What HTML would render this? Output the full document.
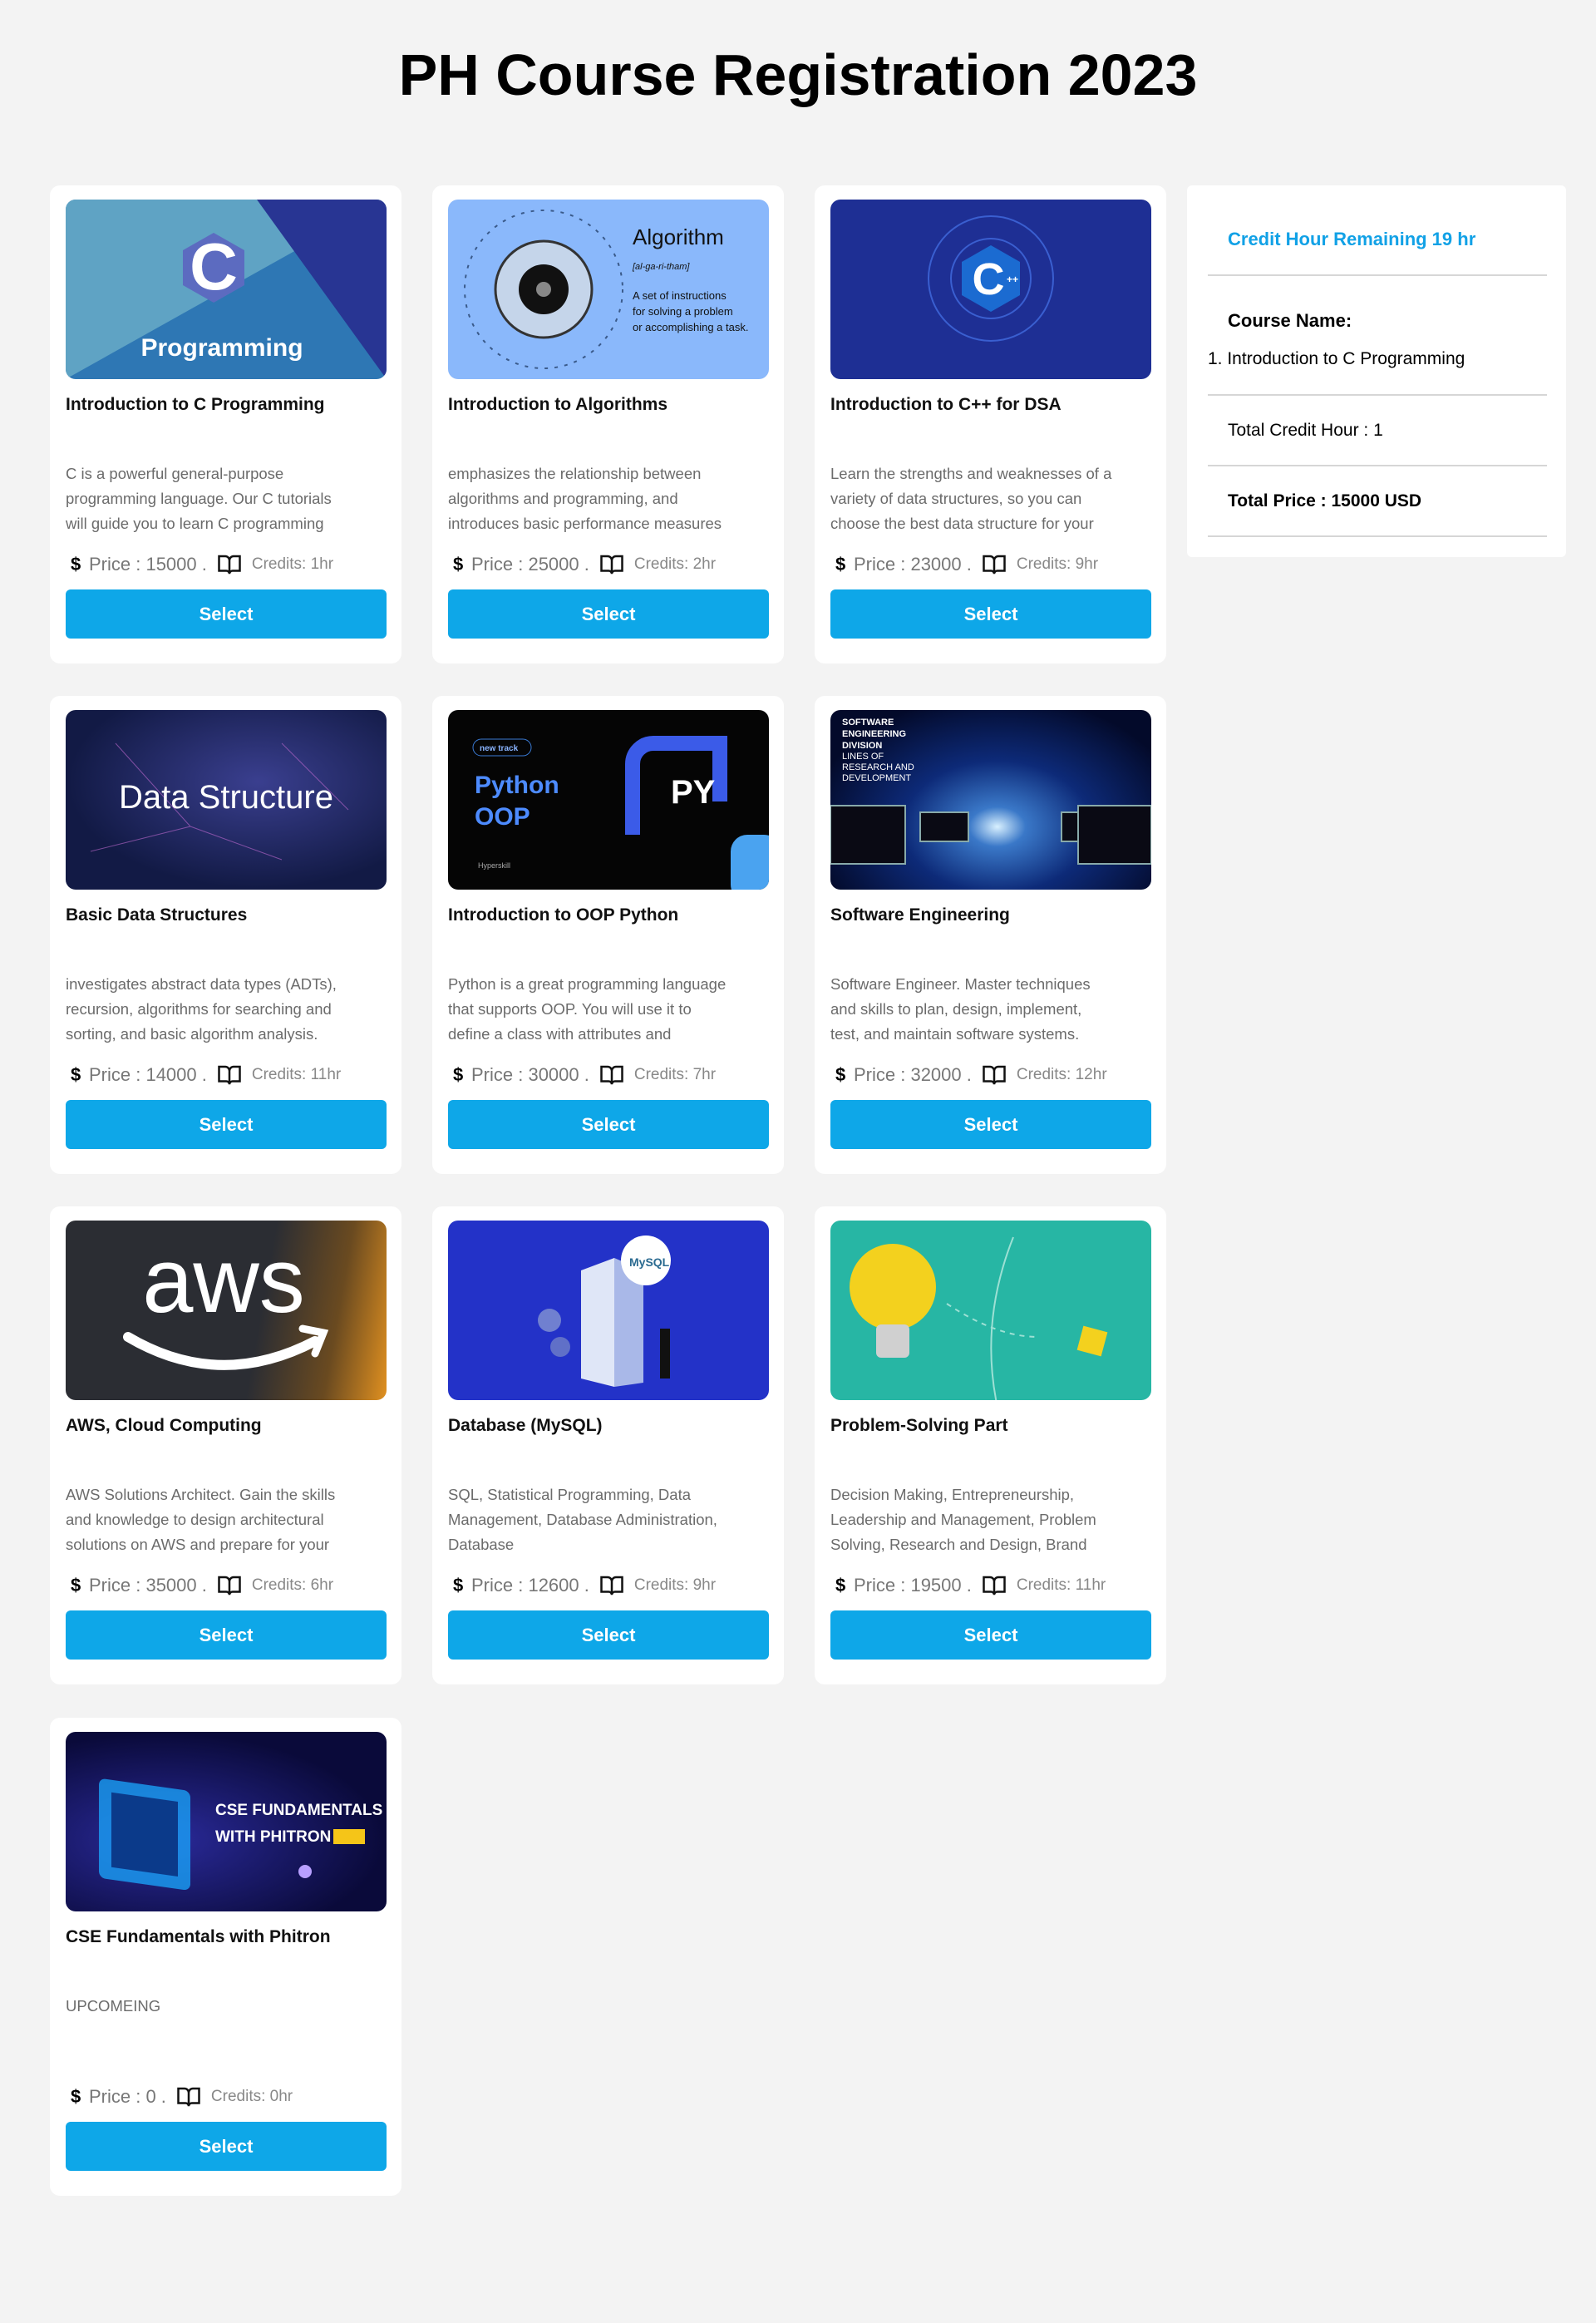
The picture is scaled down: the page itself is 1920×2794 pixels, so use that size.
<!DOCTYPE html>
<html><head><meta charset="utf-8">
<style>
*{box-sizing:border-box;margin:0;padding:0}
body{width:1920px;height:2794px;background:#f3f3f3;font-family:"Liberation Sans",sans-serif;position:relative;overflow:hidden}
h1{position:absolute;top:48px;left:0;width:1920px;text-align:center;font-size:70px;font-weight:900;color:#000;line-height:84px}
.card{position:absolute;width:423px;height:575px;background:#fff;border-radius:12px}
.img{position:absolute;left:19px;top:17px;width:386px;height:216px;border-radius:12px;overflow:hidden}
.t{position:absolute;left:19px;top:252px;font-size:21px;font-weight:bold;color:#111}
.d{position:absolute;left:19px;top:332px;width:390px;font-size:18.5px;line-height:30px;color:#6b6b6b;height:90px;overflow:hidden;white-space:nowrap}
.p{position:absolute;left:19px;top:440px;height:32px;display:flex;align-items:center;color:#777;font-size:22px;white-space:nowrap}
.p .dl{font-weight:900;color:#000;width:22px;margin-left:6px;font-size:22px}
.p .bk{margin:0 12px 0 12px}
.p .cr{font-size:19px;color:#888}
.b{position:absolute;left:19px;top:486px;width:386px;height:59px;background:#0ea7e8;border-radius:6px;color:#fff;font-weight:bold;font-size:22px;text-align:center;line-height:59px}
.side{position:absolute;left:1428px;top:223px;width:456px;height:447px;background:#fff;border-radius:6px}
.side .hr{position:absolute;left:25px;width:408px;height:2px;background:#d6d6d6}
.side div.tx{position:absolute;left:49px;font-size:21px;color:#000}
</style></head><body>
<h1>PH Course Registration 2023</h1>

<!-- Row 1 -->
<div class="card" style="left:60px;top:223px">
 <div class="img" style="background:#2e77b4">
  <svg width="386" height="216"><polygon points="0,0 386,0 0,216" fill="#5fa3c4"/><polygon points="230,0 386,0 386,216" fill="#283593"/>
  <polygon points="178,40 215,61 215,103 178,124 141,103 141,61" fill="#5c6bc0"/>
  <text x="178" y="108" text-anchor="middle" font-size="80" font-weight="bold" fill="#fff" font-family="Liberation Sans">C</text>
  <text x="188" y="188" text-anchor="middle" font-size="30" font-weight="bold" fill="#fff" font-family="Liberation Sans">Programming</text></svg>
 </div>
 <div class="t">Introduction to C Programming</div>
 <div class="d">C is a powerful general-purpose<br>programming language. Our C tutorials<br>will guide you to learn C programming</div>
 <div class="p"><span class="dl">$</span>Price : 15000 .<svg class="bk" width="30" height="28" viewBox="0 0 24 22"><path d="M2 3h6a4 4 0 0 1 4 4v13a3 3 0 0 0-3-3H2zM22 3h-6a4 4 0 0 0-4 4v13a3 3 0 0 1 3-3h7z" fill="none" stroke="#111" stroke-width="2"/></svg><span class="cr">Credits: 1hr</span></div>
 <div class="b">Select</div>
</div>

<div class="card" style="left:520px;top:223px">
 <div class="img" style="background:#8ab8fb">
  <svg width="386" height="216"><circle cx="115" cy="108" r="95" fill="none" stroke="#3a5a8a" stroke-width="2" stroke-dasharray="4 8"/><circle cx="115" cy="108" r="58" fill="#c5d5ea" stroke="#333" stroke-width="3"/><circle cx="115" cy="108" r="30" fill="#111"/><circle cx="115" cy="108" r="9" fill="#888"/>
  <text x="222" y="54" font-size="26" fill="#111" font-family="Liberation Sans">Algorithm</text>
  <text x="222" y="84" font-size="11" fill="#111" font-style="italic" font-family="Liberation Sans">[al-ga-ri-tham]</text>
  <text x="222" y="120" font-size="13" fill="#111" font-family="Liberation Sans">A set of instructions</text>
  <text x="222" y="139" font-size="13" fill="#111" font-family="Liberation Sans">for solving a problem</text>
  <text x="222" y="158" font-size="13" fill="#111" font-family="Liberation Sans">or accomplishing a task.</text></svg>
 </div>
 <div class="t">Introduction to Algorithms</div>
 <div class="d">emphasizes the relationship between<br>algorithms and programming, and<br>introduces basic performance measures</div>
 <div class="p"><span class="dl">$</span>Price : 25000 .<svg class="bk" width="30" height="28" viewBox="0 0 24 22"><path d="M2 3h6a4 4 0 0 1 4 4v13a3 3 0 0 0-3-3H2zM22 3h-6a4 4 0 0 0-4 4v13a3 3 0 0 1 3-3h7z" fill="none" stroke="#111" stroke-width="2"/></svg><span class="cr">Credits: 2hr</span></div>
 <div class="b">Select</div>
</div>

<div class="card" style="left:980px;top:223px">
 <div class="img" style="background:#1e2f94">
  <svg width="386" height="216"><g stroke="#3a5fd0" stroke-width="2" fill="none"><circle cx="193" cy="95" r="75"/><circle cx="193" cy="95" r="48"/></g>
  <polygon points="193,55 228,75 228,115 193,135 158,115 158,75" fill="#1b6bd1"/>
  <text x="190" y="114" text-anchor="middle" font-size="54" font-weight="bold" fill="#fff" font-family="Liberation Sans">C</text>
  <text x="212" y="100" font-size="12" font-weight="bold" fill="#fff" font-family="Liberation Sans">++</text></svg>
 </div>
 <div class="t">Introduction to C++ for DSA</div>
 <div class="d">Learn the strengths and weaknesses of a<br>variety of data structures, so you can<br>choose the best data structure for your</div>
 <div class="p"><span class="dl">$</span>Price : 23000 .<svg class="bk" width="30" height="28" viewBox="0 0 24 22"><path d="M2 3h6a4 4 0 0 1 4 4v13a3 3 0 0 0-3-3H2zM22 3h-6a4 4 0 0 0-4 4v13a3 3 0 0 1 3-3h7z" fill="none" stroke="#111" stroke-width="2"/></svg><span class="cr">Credits: 9hr</span></div>
 <div class="b">Select</div>
</div>

<!-- Row 2 -->
<div class="card" style="left:60px;top:837px">
 <div class="img" style="background:radial-gradient(ellipse at 60% 40%,#3a3f8f,#121a45 70%)">
  <svg width="386" height="216"><g stroke="#c06ad0" stroke-width="1" opacity=".6"><line x1="30" y1="170" x2="150" y2="140"/><line x1="150" y1="140" x2="260" y2="180"/><line x1="260" y1="40" x2="340" y2="120"/><line x1="60" y1="40" x2="150" y2="140"/></g>
  <text x="193" y="118" text-anchor="middle" font-size="40" fill="#fff" font-family="Liberation Sans">Data Structure</text></svg>
 </div>
 <div class="t">Basic Data Structures</div>
 <div class="d">investigates abstract data types (ADTs),<br>recursion, algorithms for searching and<br>sorting, and basic algorithm analysis.</div>
 <div class="p"><span class="dl">$</span>Price : 14000 .<svg class="bk" width="30" height="28" viewBox="0 0 24 22"><path d="M2 3h6a4 4 0 0 1 4 4v13a3 3 0 0 0-3-3H2zM22 3h-6a4 4 0 0 0-4 4v13a3 3 0 0 1 3-3h7z" fill="none" stroke="#111" stroke-width="2"/></svg><span class="cr">Credits: 11hr</span></div>
 <div class="b">Select</div>
</div>

<div class="card" style="left:520px;top:837px">
 <div class="img" style="background:#050505">
  <svg width="386" height="216"><rect x="30" y="35" width="70" height="20" rx="10" fill="none" stroke="#3a7bd5"/><text x="38" y="49" font-size="10" fill="#8ab4ff" font-weight="bold" font-family="Liberation Sans">new track</text>
  <text x="32" y="100" font-size="30" fill="#4d8bff" font-weight="bold" font-family="Liberation Sans">Python</text>
  <text x="32" y="138" font-size="30" fill="#4d8bff" font-weight="bold" font-family="Liberation Sans">OOP</text>
  <path d="M222 150V65a25 25 0 0 1 25-25h80v70" fill="none" stroke="#3b5be8" stroke-width="18"/>
  <text x="268" y="112" font-size="40" fill="#fff" font-weight="bold" font-family="Liberation Sans">PY</text>
  <rect x="340" y="150" width="60" height="80" rx="20" fill="#4aa3f0"/>
  <text x="36" y="190" font-size="9" fill="#aaa" font-family="Liberation Sans">Hyperskill</text></svg>
 </div>
 <div class="t">Introduction to OOP Python</div>
 <div class="d">Python is a great programming language<br>that supports OOP. You will use it to<br>define a class with attributes and</div>
 <div class="p"><span class="dl">$</span>Price : 30000 .<svg class="bk" width="30" height="28" viewBox="0 0 24 22"><path d="M2 3h6a4 4 0 0 1 4 4v13a3 3 0 0 0-3-3H2zM22 3h-6a4 4 0 0 0-4 4v13a3 3 0 0 1 3-3h7z" fill="none" stroke="#111" stroke-width="2"/></svg><span class="cr">Credits: 7hr</span></div>
 <div class="b">Select</div>
</div>

<div class="card" style="left:980px;top:837px">
 <div class="img" style="background:radial-gradient(ellipse at 52% 65%,#d8f0ff 0,#3a78c8 12%,#0d2a78 40%,#030a2a 80%)">
  <svg width="386" height="216"><g font-family="Liberation Sans" fill="#fff" font-size="11"><text x="14" y="18" font-weight="bold">SOFTWARE</text><text x="14" y="32" font-weight="bold">ENGINEERING</text><text x="14" y="46" font-weight="bold">DIVISION</text><text x="14" y="59">LINES OF</text><text x="14" y="72">RESEARCH AND</text><text x="14" y="85">DEVELOPMENT</text></g>
  <g fill="#0a0a14" stroke="#8aa" stroke-width="2"><rect x="108" y="123" width="58" height="35"/><rect x="278" y="123" width="58" height="35"/><rect x="298" y="115" width="88" height="70"/><rect x="0" y="115" width="90" height="70"/></g></svg>
 </div>
 <div class="t">Software Engineering</div>
 <div class="d">Software Engineer. Master techniques<br>and skills to plan, design, implement,<br>test, and maintain software systems.</div>
 <div class="p"><span class="dl">$</span>Price : 32000 .<svg class="bk" width="30" height="28" viewBox="0 0 24 22"><path d="M2 3h6a4 4 0 0 1 4 4v13a3 3 0 0 0-3-3H2zM22 3h-6a4 4 0 0 0-4 4v13a3 3 0 0 1 3-3h7z" fill="none" stroke="#111" stroke-width="2"/></svg><span class="cr">Credits: 12hr</span></div>
 <div class="b">Select</div>
</div>

<!-- Row 3 -->
<div class="card" style="left:60px;top:1451px">
 <div class="img" style="background:linear-gradient(100deg,#2b2d33 0%,#2b2d33 60%,#6a4a20 82%,#e09020 100%)">
  <svg width="386" height="216"><text x="190" y="110" text-anchor="middle" font-size="110" fill="#fff" font-family="Liberation Sans">aws</text>
  <path d="M75 140q110 65 225 5" fill="none" stroke="#fff" stroke-width="12" stroke-linecap="round"/><path d="M285 130l25 5-10 25" fill="none" stroke="#fff" stroke-width="9" stroke-linecap="round"/></svg>
 </div>
 <div class="t">AWS, Cloud Computing</div>
 <div class="d">AWS Solutions Architect. Gain the skills<br>and knowledge to design architectural<br>solutions on AWS and prepare for your</div>
 <div class="p"><span class="dl">$</span>Price : 35000 .<svg class="bk" width="30" height="28" viewBox="0 0 24 22"><path d="M2 3h6a4 4 0 0 1 4 4v13a3 3 0 0 0-3-3H2zM22 3h-6a4 4 0 0 0-4 4v13a3 3 0 0 1 3-3h7z" fill="none" stroke="#111" stroke-width="2"/></svg><span class="cr">Credits: 6hr</span></div>
 <div class="b">Select</div>
</div>

<div class="card" style="left:520px;top:1451px">
 <div class="img" style="background:#2332c8">
  <svg width="386" height="216"><g fill="#dfe6f7"><polygon points="160,60 200,45 200,200 160,190"/><polygon points="200,45 235,60 235,195 200,200" fill="#a9b8e8"/></g><circle cx="238" cy="48" r="30" fill="#fff"/><text x="218" y="55" font-size="14" fill="#2a6a90" font-weight="bold" font-family="Liberation Sans">MySQL</text><circle cx="122" cy="120" r="14" fill="#7080d0"/><circle cx="135" cy="152" r="12" fill="#6070c8"/><rect x="255" y="130" width="12" height="60" fill="#111"/></svg>
 </div>
 <div class="t">Database (MySQL)</div>
 <div class="d">SQL, Statistical Programming, Data<br>Management, Database Administration,<br>Database</div>
 <div class="p"><span class="dl">$</span>Price : 12600 .<svg class="bk" width="30" height="28" viewBox="0 0 24 22"><path d="M2 3h6a4 4 0 0 1 4 4v13a3 3 0 0 0-3-3H2zM22 3h-6a4 4 0 0 0-4 4v13a3 3 0 0 1 3-3h7z" fill="none" stroke="#111" stroke-width="2"/></svg><span class="cr">Credits: 9hr</span></div>
 <div class="b">Select</div>
</div>

<div class="card" style="left:980px;top:1451px">
 <div class="img" style="background:#27b6a4">
  <svg width="386" height="216"><circle cx="75" cy="80" r="52" fill="#f3d11e"/><rect x="55" y="125" width="40" height="40" rx="6" fill="#d0d0d0"/><path d="M140 100q60 40 110 40" fill="none" stroke="#9de0d4" stroke-width="2" stroke-dasharray="6 6"/><path d="M300 130l30 0 0 30-30 0z" fill="#f3d11e" transform="rotate(15 315 145)"/><path d="M220 20q-40 100 -20 200" fill="none" stroke="#9de0d4" stroke-width="2"/></svg>
 </div>
 <div class="t">Problem-Solving Part</div>
 <div class="d">Decision Making, Entrepreneurship,<br>Leadership and Management, Problem<br>Solving, Research and Design, Brand</div>
 <div class="p"><span class="dl">$</span>Price : 19500 .<svg class="bk" width="30" height="28" viewBox="0 0 24 22"><path d="M2 3h6a4 4 0 0 1 4 4v13a3 3 0 0 0-3-3H2zM22 3h-6a4 4 0 0 0-4 4v13a3 3 0 0 1 3-3h7z" fill="none" stroke="#111" stroke-width="2"/></svg><span class="cr">Credits: 11hr</span></div>
 <div class="b">Select</div>
</div>

<!-- Row 4 -->
<div class="card" style="left:60px;top:2066px">
 <div class="img" style="background:radial-gradient(ellipse at 30% 60%,#2a2a9a,#0a0a3a 70%)">
  <svg width="386" height="216"><rect x="40" y="50" width="110" height="120" rx="8" fill="#1aa8ff" opacity=".75" transform="skewY(8)"/><rect x="55" y="65" width="80" height="90" fill="#0b3a8a" transform="skewY(8)"/>
  <text x="180" y="100" font-size="19" fill="#fff" font-weight="bold" font-family="Liberation Sans">CSE FUNDAMENTALS</text>
  <text x="180" y="132" font-size="19" fill="#fff" font-weight="bold" font-family="Liberation Sans">WITH PHITRON</text><rect x="322" y="117" width="38" height="18" fill="#f5c518"/>
  <circle cx="288" cy="168" r="8" fill="#b8a0ff"/></svg>
 </div>
 <div class="t">CSE Fundamentals with Phitron</div>
 <div class="d">UPCOMEING</div>
 <div class="p"><span class="dl">$</span>Price : 0 .<svg class="bk" width="30" height="28" viewBox="0 0 24 22"><path d="M2 3h6a4 4 0 0 1 4 4v13a3 3 0 0 0-3-3H2zM22 3h-6a4 4 0 0 0-4 4v13a3 3 0 0 1 3-3h7z" fill="none" stroke="#111" stroke-width="2"/></svg><span class="cr">Credits: 0hr</span></div>
 <div class="b">Select</div>
</div>

<!-- Sidebar -->
<div class="side">
 <div class="tx" style="top:52px;color:#11a1e6;font-weight:900;font-size:22px">Credit Hour Remaining 19 hr</div>
 <div class="hr" style="top:107px"></div>
 <div class="tx" style="top:150px;font-weight:900;font-size:22px">Course Name:</div>
 <div class="tx" style="top:197px;left:25px">1. Introduction to C Programming</div>
 <div class="hr" style="top:251px"></div>
 <div class="tx" style="top:283px">Total Credit Hour : 1</div>
 <div class="hr" style="top:336px"></div>
 <div class="tx" style="top:368px;font-weight:bold">Total Price : 15000 USD</div>
 <div class="hr" style="top:421px"></div>
</div>
</body></html>
